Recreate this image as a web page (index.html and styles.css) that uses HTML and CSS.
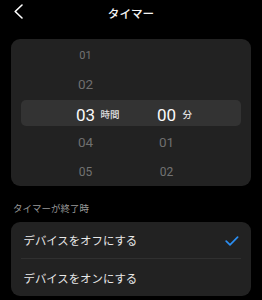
FILE: index.html
```html
<!DOCTYPE html>
<html lang="ja">
<head>
<meta charset="utf-8">
<link rel="stylesheet" href="styles.css">
</head>
<body>
<header class="topbar">
  <svg class="back" width="40" height="26" viewBox="0 0 40 26"><path d="M22 5 L15.2 11.5 L22 18" fill="none" stroke="#fff" stroke-width="1.6" stroke-linecap="round" stroke-linejoin="round"/></svg>
  <h1 class="title">タイマー</h1>
  <span></span>
</header>

<section class="picker">
  <div class="wrow r1"><span class="num h">01</span></div>
  <div class="wrow r2"><span class="num h">02</span></div>
  <div class="wrow sel"><span class="num h">03</span><span class="unit hu">時間</span><span class="num m">00</span><span class="unit mu">分</span></div>
  <div class="wrow r2"><span class="num h">04</span><span class="num m">01</span></div>
  <div class="wrow r5"><span class="num h">05</span><span class="num m">02</span></div>
</section>

<p class="label">タイマーが終了時</p>

<section class="options">
  <div class="opt first"><span>デバイスをオフにする</span>
    <svg class="check" width="14" height="10" viewBox="0 0 14 10"><path d="M1.2 5.2 L5 8.8 L12.6 1.2" fill="none" stroke="#2b8ef2" stroke-width="1.7" stroke-linecap="round" stroke-linejoin="round"/></svg>
  </div>
  <div class="divider"></div>
  <div class="opt second"><span>デバイスをオンにする</span></div>
</section>
</body>
</html>
```
FILE: styles.css
```css
* { box-sizing: border-box; }
html, body { margin: 0; padding: 0; }
body {
  background: #000;
  color: #fff;
  font-family: Roboto, "Noto Sans CJK JP", sans-serif;
  width: 262px;
  height: 300px;
  overflow: hidden;
}
.topbar {
  display: grid;
  grid-template-columns: 40px 1fr 40px;
  height: 26px;
  align-items: center;
}
.back { display: block; }
.title {
  margin: 0;
  text-align: center;
  font-size: 11.6px;
  font-weight: 500;
  line-height: 26px;
  color: #f4f4f4;
  font-family: "Noto Sans CJK JP", sans-serif;
}
.picker {
  margin: 13px 11px 0;
  background: #222222;
  border-radius: 9px;
  padding: 2px 0 0;
  height: 147px;
}
.wrow {
  display: grid;
  grid-template-columns: 49.5px 30px 51px 30px 1fr;
  height: 29px;
  margin: 0 10px;
  align-items: center;
}
.num { text-align: center; color: #777; line-height: 1; }
.num.h { grid-column: 2; }
.num.m { grid-column: 4; }
.r1 .num { font-size: 11px; color: #737373; }
.r2 .num { font-size: 13.5px; color: #6f6f6f; }
.r5 .num { font-size: 12px; color: #737373; }
.sel {
  height: 26px;
  margin: 1px 10px 2px;
  padding-top: 4px;
  background: #333333;
  border-radius: 5px;
}
.sel .num { font-size: 17px; color: #fafafa; }
.unit {
  font-family: "Noto Sans CJK JP", sans-serif;
  font-size: 9.5px;
  font-weight: 500;
  color: #e0e0e0;
  line-height: 1;
  justify-self: start;
}
.hu { grid-column: 3; }
.mu { grid-column: 5; margin-left: 1px; }
.label {
  margin: 15px 0 0;
  padding-left: 13px;
  font-family: "Noto Sans CJK JP", sans-serif;
  font-size: 9.5px;
  line-height: 14px;
  color: #9a9a9a;
}
.options {
  margin: 7px 11px 0;
  background: #222222;
  border-radius: 9px;
}
.opt {
  display: flex;
  align-items: center;
  justify-content: space-between;
  padding: 0 12px 0 12.5px;
  font-family: "Noto Sans CJK JP", sans-serif;
  font-size: 11.4px;
  color: #e8e8e8;
}
.opt.first { height: 36px; }
.opt.second { height: 37px; }
.check { display: block; margin-top: 1px; }
.divider {
  height: 1px;
  margin: 0 10px;
  background: #303030;
}
```
